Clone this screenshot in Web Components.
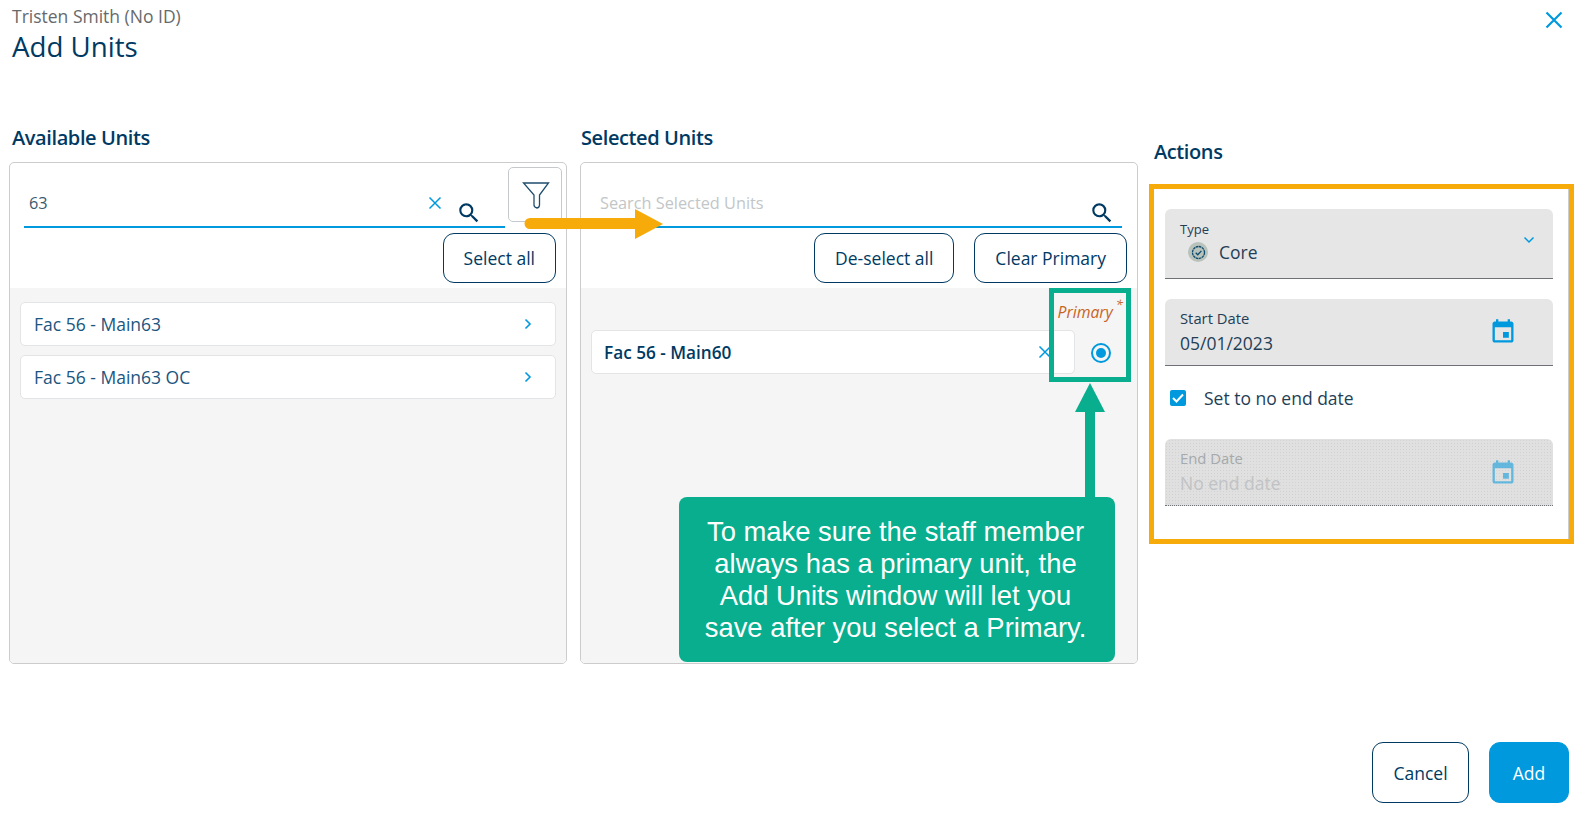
<!DOCTYPE html>
<html lang="en">
<head>
<meta charset="utf-8">
<title>Add Units</title>
<style>
    html, body { margin: 0; padding: 0; background: #fff; }
    body { font-family: "Open Sans", "Liberation Sans", sans-serif; color: #003a63; overflow: hidden; }
</style>
</head>
<body>
<add-units-page></add-units-page>

<script>
const ICONS = {
    search: '<svg width="26" height="26" viewBox="0 0 24 24" fill="#003a63"><path d="M15.5 14h-.79l-.28-.27A6.47 6.47 0 0 0 16 9.5 6.5 6.5 0 1 0 9.5 16c1.61 0 3.09-.59 4.23-1.57l.27.28v.79l5 4.99L20.49 19l-4.99-5zm-6 0C7.01 14 5 11.99 5 9.5S7.01 5 9.5 5 14 7.01 14 9.5 11.99 14 9.5 14z"/></svg>',
    close: '<svg width="14" height="14" viewBox="0 0 14 14" fill="none" stroke="#0099dd" stroke-width="1.5"><path d="M1.5 1.5l11 11M12.5 1.5l-11 11"/></svg>',
    chevron: '<svg width="10" height="12" viewBox="0 0 10 12" fill="none" stroke="#0099dd" stroke-width="1.6"><path d="M2.5 1.5L7 6l-4.5 4.5"/></svg>',
    calendar: '<svg width="28" height="28" viewBox="0 0 24 24" fill="#0099dd"><path d="M17 12h-5v5h5v-5zM16 1v2H8V1H6v2H5c-1.11 0-1.99.9-1.99 2L3 19c0 1.1.89 2 2 2h14c1.1 0 2-.9 2-2V5c0-1.1-.9-2-2-2h-1V1h-2zm3 18H5V8h14v11z"/></svg>'
};

class PageHeader extends HTMLElement {
    constructor() {
        super();
        this.attachShadow({ mode: 'open' });
        this.shadowRoot.innerHTML = `
            <style>
                :host { display: flex; justify-content: space-between; height: 124px; padding: 5px 29px 0 12px; box-sizing: border-box; }
                .who { font-size: 17.5px; line-height: 22px; color: #66696b; }
                h1 { margin: 0; font-size: 27.7px; line-height: 38px; font-weight: 400; color: #003a63; }
                svg { margin-top: 6px; }
            </style>
            <div>
                <div class="who">Tristen Smith (No ID)</div>
                <h1>Add Units</h1>
            </div>
            <svg width="18" height="18" viewBox="0 0 18 18" fill="none" stroke="#0099dd" stroke-width="2.2"><path d="M1.5 1.5l15 15M16.5 1.5l-15 15"/></svg>
        `;
    }
}

class OutlineButton extends HTMLElement {
    constructor() {
        super();
        this.attachShadow({ mode: 'open' });
        this.shadowRoot.innerHTML = `
            <style>
                :host { display: inline-flex; align-items: center; justify-content: center; box-sizing: border-box; height: 50px; padding: 0 20px; border: 1px solid #003a63; border-radius: 11px; font-size: 17.5px; color: #003a63; background: #fff; }
                :host([primary]) { background: #0099dd; border-color: #0099dd; color: #fff; }
            </style>
            <slot></slot>
        `;
    }
}

class SearchField extends HTMLElement {
    constructor() {
        super();
        this.attachShadow({ mode: 'open' });
        const value = this.getAttribute('value');
        this.shadowRoot.innerHTML = `
            <style>
                :host { display: flex; flex: 1; align-items: flex-start; box-sizing: border-box; height: 65px; border-bottom: 2px solid #0099dd; padding: 28px 7px 0 5px; font-size: 16.3px; line-height: 24px; }
                :host([value]) { padding-right: 23px; }
                .text { flex: 1; color: #3a5a70; }
                .hint { color: #c2c6c8; }
                .x { margin: 5px 14px 0 0; }
                .s { margin-top: 9px; }
                .x, .s { display: flex; }
            </style>
            <span class="text ${value ? '' : 'hint'}">${value || this.getAttribute('placeholder')}</span>
            ${value ? `<span class="x">${ICONS.close}</span>` : ''}
            <span class="s">${ICONS.search}</span>
        `;
    }
}

class UnitItem extends HTMLElement {
    constructor() {
        super();
        this.attachShadow({ mode: 'open' });
        this.shadowRoot.innerHTML = `
            <style>
                :host { display: flex; align-items: center; justify-content: space-between; box-sizing: border-box; height: 44px; padding: 0 22px 0 13px; background: #fff; border: 1px solid #e2e4e5; border-radius: 5px; font-size: 17.5px; color: #1b567f; }
                :host([selected]) { flex: 1; font-weight: 600; font-size: 17.2px; color: #003a63; padding-right: 22px; padding-left: 12px; }
                span { display: flex; }
            </style>
            <slot></slot>
            <span>${this.hasAttribute('selected') ? ICONS.close : ICONS.chevron}</span>
        `;
    }
}

class UnitPanel extends HTMLElement {
    constructor() {
        super();
        this.attachShadow({ mode: 'open' });
        this.shadowRoot.innerHTML = `
            <style>
                :host { display: block; }
                h2 { margin: 0 0 11px var(--head-left, 3px); font-size: 20px; line-height: 27px; font-weight: 600; color: #003a63; letter-spacing: -0.4px; }
                .box { box-sizing: border-box; height: 502px; border: 1px solid #cccccc; border-radius: 5px; display: flex; flex-direction: column; overflow: hidden; }
                .top { display: flex; align-items: flex-start; padding: 0 var(--top-right, 4px) 0 14px; gap: 3px; }
                .buttons { display: flex; justify-content: flex-end; gap: 20px; padding: 5px 10px 5px 0; }
                .list { flex: 1; background: #f5f5f5; }
            </style>
            <h2>${this.getAttribute('heading')}</h2>
            <div class="box">
                <div class="top"><slot name="search"></slot></div>
                <div class="buttons"><slot name="buttons"></slot></div>
                <div class="list"><slot></slot></div>
            </div>
        `;
    }
}

class FilterButton extends HTMLElement {
    constructor() {
        super();
        this.attachShadow({ mode: 'open' });
        this.shadowRoot.innerHTML = `
            <style>
                :host { display: flex; align-items: center; justify-content: center; box-sizing: border-box; width: 54px; height: 55px; margin-top: 4px; flex: none; border: 1px solid #c6c9cb; border-radius: 5px; background: #fff; }
                svg { margin-left: 1px; }
            </style>
            <svg width="28" height="28" viewBox="0 0 28 28" fill="none" stroke="#1f4d6d" stroke-width="1.3"><path d="M1.5 2h25L17.5 14v10q0 2.5-2.5 3-3-.7-3-3V14z"/></svg>
        `;
    }
}

class AvailableList extends HTMLElement {
    constructor() {
        super();
        this.attachShadow({ mode: 'open' });
        this.shadowRoot.innerHTML = `
            <style>
                :host { display: flex; flex-direction: column; gap: 9px; padding: 14px 10px 0 10px; }
            </style>
            <slot></slot>
        `;
    }
}

class SelectedList extends HTMLElement {
    constructor() {
        super();
        this.attachShadow({ mode: 'open' });
        this.shadowRoot.innerHTML = `
            <style>
                :host { display: block; padding: 0 12px 0 10px; }
                .head { display: flex; justify-content: flex-end; height: 42px; padding: 13px 2px 0 0; box-sizing: border-box; font-size: 15.8px; font-style: italic; color: #c8641e; line-height: 22px; }
                sup { font-size: 13px; line-height: 0; margin-left: 3px; position: relative; top: 3px; }
                .row { display: flex; align-items: center; }
                .radio { flex: none; width: 20px; height: 20px; margin: 1px 14px 0 16px; box-sizing: border-box; border: 2px solid #0099dd; border-radius: 50%; display: flex; align-items: center; justify-content: center; }
                .radio i { width: 10px; height: 10px; border-radius: 50%; background: #0099dd; }
            </style>
            <div class="head"><span>Primary</span><sup>*</sup></div>
            <div class="row"><slot></slot><div class="radio"><i></i></div></div>
        `;
    }
}

class FilledField extends HTMLElement {
    constructor() {
        super();
        this.attachShadow({ mode: 'open' });
        this.shadowRoot.innerHTML = `
            <style>
                :host { display: flex; align-items: center; justify-content: space-between; box-sizing: border-box; height: 67px; padding: 0 36px 0 15px; background: #e6e6e6; border-bottom: 1px solid #6e7276; border-radius: 6px 6px 0 0; color: #1f3f57; }
                :host([disabled]) { background-color: #e0e0e0; background-image: radial-gradient(#d2d2d2 0.8px, transparent 0.9px); background-size: 3px 3px; border-bottom: 1px dotted #6e7276; color: #a4a9ac; }
                :host([disabled]) .icon { opacity: .55; margin-top: 2px; }
                .label { font-size: 14.8px; line-height: 20px; }
                .value { font-size: 17.5px; line-height: 28px; padding-top: 1px; }
                :host([disabled]) .value { color: #c0c3c5; }
                .icon { display: flex; }
            </style>
            <div>
                <div class="label">${this.getAttribute('label')}</div>
                <div class="value">${this.getAttribute('value')}</div>
            </div>
            <span class="icon">${ICONS.calendar}</span>
        `;
    }
}

class TypeField extends HTMLElement {
    constructor() {
        super();
        this.attachShadow({ mode: 'open' });
        this.shadowRoot.innerHTML = `
            <style>
                :host { display: flex; justify-content: space-between; box-sizing: border-box; height: 70px; padding: 11px 18px 0 15px; background: #e6e6e6; border-bottom: 1px solid #6e7276; border-radius: 6px 6px 0 0; color: #1f3f57; }
                .label { font-size: 13px; line-height: 18px; }
                .value { display: flex; align-items: center; gap: 11px; padding-left: 8px; font-size: 17.5px; line-height: 28px; }
                .badge { width: 20px; height: 20px; border-radius: 50%; background: #b9c2bb; display: flex; align-items: center; justify-content: center; }
                .chev { margin-top: 15px; }
            </style>
            <div>
                <div class="label">Type</div>
                <div class="value">
                    <span class="badge"><svg width="15" height="15" viewBox="0 0 14 14" fill="none" stroke="#0c4a6e" stroke-width="1.2"><circle cx="7" cy="7" r="5.6" stroke-dasharray="2.4 .5"/><path d="M4.4 7.2l1.9 1.9 3.4-3.6"/></svg></span>
                    Core
                </div>
            </div>
            <svg class="chev" width="12" height="10" viewBox="0 0 12 10" fill="none" stroke="#0099dd" stroke-width="1.5"><path d="M1.5 2.5L6 7l4.5-4.5"/></svg>
        `;
    }
}

class EndDateCheck extends HTMLElement {
    constructor() {
        super();
        this.attachShadow({ mode: 'open' });
        this.shadowRoot.innerHTML = `
            <style>
                :host { display: flex; align-items: center; gap: 18px; height: 63px; margin-bottom: 10px; padding-left: 5px; font-size: 17.5px; color: #1f3f57; }
                .box { width: 16px; height: 16px; border-radius: 2px; background: #0099dd; display: flex; align-items: center; justify-content: center; }
            </style>
            <span class="box"><svg width="12" height="10" viewBox="0 0 12 10" fill="none" stroke="#fff" stroke-width="2"><path d="M1 5l3.5 3.5L11 1.5"/></svg></span>
            <span><slot></slot></span>
        `;
    }
}

class ActionsColumn extends HTMLElement {
    constructor() {
        super();
        this.attachShadow({ mode: 'open' });
        this.shadowRoot.innerHTML = `
            <style>
                :host { display: block; width: 388px; margin-left: 27px; padding-top: 14px; }
                h2 { margin: 0 0 44px -11px; font-size: 20px; line-height: 27px; font-weight: 600; color: #003a63; letter-spacing: -0.4px; }
                .gap { height: 20px; }
            </style>
            <h2>Actions</h2>
            <type-field></type-field>
            <div class="gap"></div>
            <filled-field label="Start Date" value="05/01/2023"></filled-field>
            <end-date-check>Set to no end date</end-date-check>
            <filled-field disabled label="End Date" value="No end date"></filled-field>
        `;
    }
}

// the teal and orange markings drawn on top of the screenshot
class AnnotationLayer extends HTMLElement {
    constructor() {
        super();
        this.attachShadow({ mode: 'open' });
        this.shadowRoot.innerHTML = `
            <style>
                :host { position: absolute; inset: 0; pointer-events: none; display: block; }
                .orange-box { position: absolute; left: 1149px; top: 184px; width: 425px; height: 360px; box-sizing: border-box; border: 5px solid #f7ab0a; }
                .orange-box::after { content: ""; position: absolute; top: 0; bottom: 0; right: 0; width: 1px; background: #cccccc; }
                .green-box { position: absolute; left: 1049px; top: 288px; width: 82px; height: 94px; box-sizing: border-box; border: 5px solid #08ae8e; }
                .note { position: absolute; left: 679px; top: 497px; width: 436px; height: 165px; box-sizing: border-box; background: #08ae8e; border-radius: 8px; color: #fff; font-family: "Liberation Sans", Arial, sans-serif; font-size: 27.4px; line-height: 32px; text-align: center; padding: 19px 3px 0 0; }
                svg { position: absolute; left: 0; top: 0; }
            </style>
            <div class="orange-box"></div>
            <div class="green-box"></div>
            <svg width="1592" height="824">
                <path d="M530 218H635V209L663 224 635 239V229H530a5.5 5.5 0 0 1 0-11z" fill="#f7ab0a"/>
                <path d="M1090 383L1105 412H1095V497H1085V412H1075z" fill="#08ae8e"/>
            </svg>
            <div class="note">To make sure the staff member<br>always has a primary unit, the<br>Add Units window will let you<br>save after you select a Primary.</div>
        `;
    }
}

class AddUnitsPage extends HTMLElement {
    constructor() {
        super();
        this.attachShadow({ mode: 'open' });
        this.shadowRoot.innerHTML = `
            <style>
                :host { display: block; position: relative; height: 824px; overflow: hidden; font-family: "Open Sans", "Liberation Sans", sans-serif; color: #003a63; }
                .cols { display: grid; grid-template-columns: 558px 558px auto; column-gap: 13px; padding-left: 9px; height: 618px; }
                .cols actions-column { margin-left: 14px; }
                .second { --head-left: 1px; --top-right: 15px; }
                .foot { display: flex; justify-content: flex-end; gap: 20px; padding-right: 23px; }
                .foot outline-button { height: 61px; }
                .cancel { width: 97px; }
                .add { width: 80px; }
            </style>
            <page-header></page-header>
            <div class="cols">
                <unit-panel heading="Available Units">
                    <search-field slot="search" value="63"></search-field>
                    <filter-button slot="search"></filter-button>
                    <outline-button slot="buttons">Select all</outline-button>
                    <available-list>
                        <unit-item>Fac 56 - Main63</unit-item>
                        <unit-item>Fac 56 - Main63 OC</unit-item>
                    </available-list>
                </unit-panel>
                <unit-panel class="second" heading="Selected Units">
                    <search-field slot="search" placeholder="Search Selected Units"></search-field>
                    <outline-button slot="buttons">De-select all</outline-button>
                    <outline-button slot="buttons">Clear Primary</outline-button>
                    <selected-list>
                        <unit-item selected>Fac 56 - Main60</unit-item>
                    </selected-list>
                </unit-panel>
                <actions-column></actions-column>
            </div>
            <div class="foot">
                <outline-button class="cancel">Cancel</outline-button>
                <outline-button class="add" primary>Add</outline-button>
            </div>
            <annotation-layer></annotation-layer>
        `;
    }
}

customElements.define('page-header', PageHeader);
customElements.define('outline-button', OutlineButton);
customElements.define('search-field', SearchField);
customElements.define('filter-button', FilterButton);
customElements.define('unit-item', UnitItem);
customElements.define('unit-panel', UnitPanel);
customElements.define('available-list', AvailableList);
customElements.define('selected-list', SelectedList);
customElements.define('filled-field', FilledField);
customElements.define('type-field', TypeField);
customElements.define('end-date-check', EndDateCheck);
customElements.define('actions-column', ActionsColumn);
customElements.define('annotation-layer', AnnotationLayer);
customElements.define('add-units-page', AddUnitsPage);
</script>
</body>
</html>
